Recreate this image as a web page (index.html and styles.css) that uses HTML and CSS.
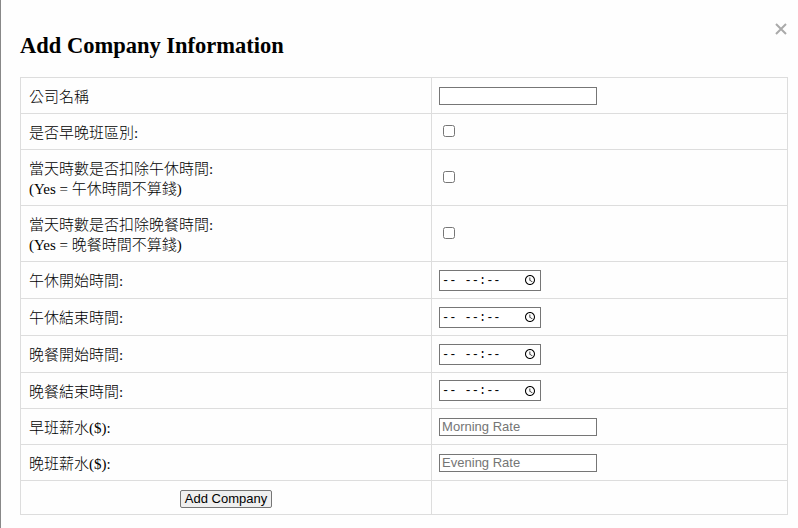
FILE: index.html
```html
<!DOCTYPE html>
<html lang="zh-Hant">
<head>
<meta charset="utf-8">
<title>Add Company Information</title>
<link rel="stylesheet" href="styles.css">
</head>
<body>
<main class="dialog">
  <button class="close" type="button" aria-label="Close">
    <svg viewBox="0 0 12 12" width="12" height="12" aria-hidden="true"><path d="M1 1L11 11M11 1L1 11"/></svg>
  </button>
  <h2>Add Company Information</h2>
  <form>
    <table>
      <colgroup><col class="label-col"><col></colgroup>
      <tbody>
      <tr><td><label for="name">公司名稱</label></td><td><input class="field" id="name" type="text"></td></tr>
      <tr><td><label for="shift">是否早晚班區別:</label></td><td><input id="shift" type="checkbox"></td></tr>
      <tr class="tall"><td><label for="lunch">當天時數是否扣除午休時間:<br>(Yes = 午休時間不算錢)</label></td><td><input id="lunch" type="checkbox"></td></tr>
      <tr class="tall"><td><label for="dinner">當天時數是否扣除晚餐時間:<br>(Yes = 晚餐時間不算錢)</label></td><td><input id="dinner" type="checkbox"></td></tr>
      <tr class="time"><td><label for="lunch-start">午休開始時間:</label></td><td><input id="lunch-start" type="time"></td></tr>
      <tr class="time"><td><label for="lunch-end">午休結束時間:</label></td><td><input id="lunch-end" type="time"></td></tr>
      <tr class="time"><td><label for="dinner-start">晚餐開始時間:</label></td><td><input id="dinner-start" type="time"></td></tr>
      <tr><td><label for="dinner-end">晚餐結束時間:</label></td><td><input id="dinner-end" type="time"></td></tr>
      <tr><td><label for="morning">早班薪水($):</label></td><td><input class="field" id="morning" type="text" placeholder="Morning Rate"></td></tr>
      <tr><td><label for="evening">晚班薪水($):</label></td><td><input class="field" id="evening" type="text" placeholder="Evening Rate"></td></tr>
      <tr class="actions"><td><button class="submit" type="button">Add Company</button></td><td></td></tr>
      </tbody>
    </table>
  </form>
</main>
</body>
</html>
```

FILE: styles.css
```css
* {
  box-sizing: border-box;
}

body {
  margin: 0;
  background: #fefefe;
  color: #000;
  font-family: "Liberation Serif", "Noto Sans CJK TC", serif;
  font-size: 15px;
  line-height: 20px;
}

.dialog {
  position: relative;
  min-height: 100vh;
  padding: 32px 10px 13px 19px;
  border-left: 1px solid #888;
}

h2 {
  margin: 0 0 17px;
  font-size: 1.5em;
  line-height: 28px;
}

.close {
  position: absolute;
  top: 23px;
  right: 11px;
  display: flex;
  padding: 0;
  border: 0;
  background: none;
}

.close svg {
  fill: none;
  stroke: #aaa;
  stroke-width: 2;
}

table {
  width: 100%;
  border-collapse: collapse;
  table-layout: fixed;
}

.label-col {
  width: 53.6%;
}

td {
  height: 36px;
  padding: 0 7px;
  border: 1px solid #ddd;
  font-weight: 300;
  vertical-align: middle;
}

td:first-child {
  padding: 2px 8px 0;
}

.tall td {
  height: 56px;
}

.time td {
  height: 37px;
}

.actions td {
  height: 34px;
}

.actions td:first-child {
  padding: 0 7px;
  text-align: center;
}

input {
  display: block;
  margin: 0;
  color: #000;
}

.field {
  width: 158px;
  height: 18px;
  padding: 0 2px;
  border: 1px solid #767676;
  background: #fff;
  font: 13px "Liberation Sans", sans-serif;
}

.field::placeholder {
  color: #757575;
}

input[type="checkbox"] {
  width: 12px;
  height: 12px;
  margin: 0 4px 2px;
}

input[type="time"] {
  width: 102px;
  height: 21px;
  padding: 1px 1px 0 2px;
  border: 1px solid #767676;
  background: #fff;
  font: 12px "Liberation Mono", monospace;
}

/* AM/PM goes before the hour */
::-webkit-datetime-edit-fields-wrapper {
  display: flex;
}

::-webkit-datetime-edit-text,
::-webkit-datetime-edit-hour-field,
::-webkit-datetime-edit-minute-field,
::-webkit-datetime-edit-ampm-field {
  padding: 1px 0;
}

::-webkit-datetime-edit-ampm-field {
  order: -1;
  margin-right: 8px;
}

.submit {
  width: 92px;
  height: 18px;
  padding: 0;
  border: 1px solid #767676;
  border-radius: 2px;
  background: #efefef;
  color: #000;
  font: 13px/16px "Liberation Sans", sans-serif;
}
```
